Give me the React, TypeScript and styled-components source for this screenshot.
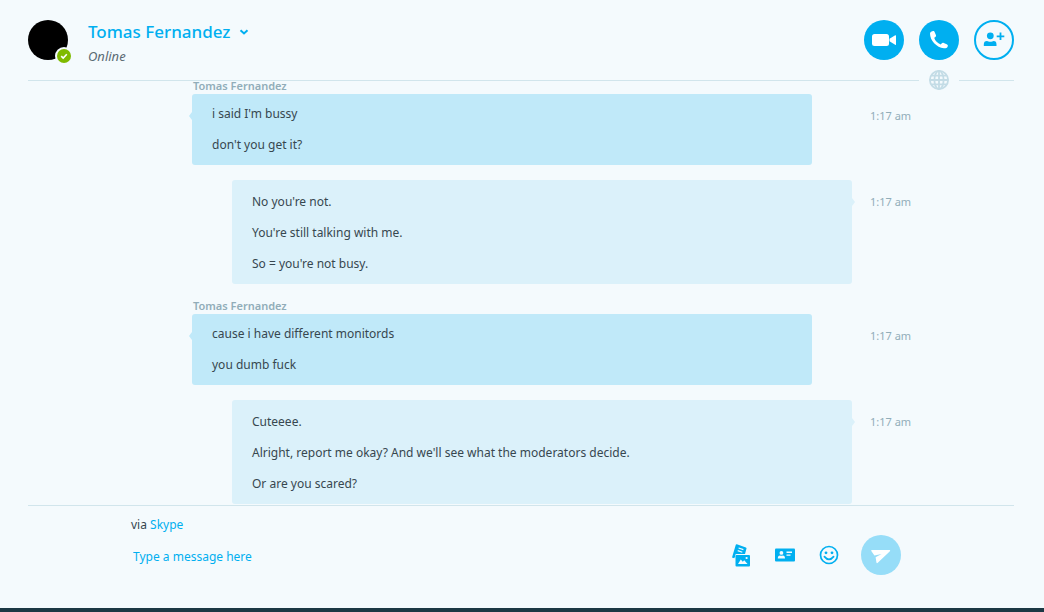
import React from "react";
import styled, { createGlobalStyle } from "styled-components";

const color = {
  page: "#f4fafd",
  blue: "#00aff0",
  sendIdle: "#96ddf8",
  incoming: "#c0e9f9",
  outgoing: "#dbf1fa",
  rule: "#d1e5ec",
  muted: "#91adb9",
  globe: "#c3dce6",
  text: "#37474f",
  online: "#7fba00",
};

const GlobalStyle = createGlobalStyle`
  *, *::before, *::after { box-sizing: border-box; }
  body {
    margin: 0;
    background: ${color.page};
    color: ${color.text};
    font-family: "Noto Sans", "Open Sans", sans-serif;
    font-size: 12px;
  }
  button { font: inherit; cursor: pointer; }
`;

const Page = styled.div`
  display: flex;
  flex-direction: column;
  height: 100vh;
  padding: 0 30px 0 28px;
  border-bottom: 4px solid #1b3844;
`;

const Header = styled.header`
  position: relative;
  display: flex;
  align-items: flex-start;
  flex: none;
  height: 81px;
  padding-top: 20px;
  border-bottom: 1px solid ${color.rule};
`;

const Avatar = styled.div`
  position: relative;
  width: 40px;
  height: 40px;
  border-radius: 50%;
  background: #000;
`;

const StatusBadge = styled.svg`
  position: absolute;
  right: -5px;
  bottom: -5px;
`;

const Contact = styled.div`
  flex: 1;
  margin-left: 20px;
`;

const ContactName = styled.h1`
  margin: 0;
  font-size: 17px;
  font-weight: 500;
  line-height: 24px;
`;

const NameButton = styled.button`
  display: flex;
  align-items: center;
  gap: 9px;
  padding: 0;
  border: 0;
  background: none;
  color: ${color.blue};
`;

const Presence = styled.p`
  margin: 2px 0 0;
  font-size: 13px;
  font-style: italic;
  line-height: 20px;
  color: #5b6b74;
`;

const Actions = styled.div`
  display: flex;
  gap: 15px;
`;

const RoundButton = styled.button<{ $fill?: string }>`
  display: grid;
  flex: none;
  place-items: center;
  width: 40px;
  height: 40px;
  padding: 0;
  border: 0;
  border-radius: 50%;
  background: ${(p) => p.$fill ?? "transparent"};
  color: ${(p) => (p.$fill ? "#fff" : color.blue)};
`;

const GlobeButton = styled.button`
  position: absolute;
  right: 55px;
  bottom: -10px;
  display: flex;
  padding: 0 10px;
  border: 0;
  background: ${color.page};
  color: ${color.globe};
`;

const Thread = styled.main`
  display: flex;
  flex: 1;
  flex-direction: column;
  justify-content: flex-end;
  gap: 15px;
  min-height: 0;
  margin-top: -4px;
  padding-bottom: 1px;
  overflow: hidden;
`;

const Message = styled.article`
  flex: none;
  width: 100%;
  max-width: 780px;
  margin: 0 auto;
  padding-left: 61px;
`;

const Sender = styled.h2`
  margin: 0;
  padding: 0 0 2px 1px;
  font-size: 11px;
  font-weight: 600;
  line-height: 13px;
  color: ${color.muted};
`;

const MessageRow = styled.div`
  display: grid;
  grid-template-columns: 1fr 59px;
`;

const Bubble = styled.div<{ $own?: boolean }>`
  position: relative;
  margin: ${(p) => (p.$own ? "0 0 0 40px" : "0 40px 0 0")};
  padding: ${(p) => (p.$own ? "6px 20px 5px" : "4px 20px 5px")};
  border-radius: 3px;
  background: ${(p) => (p.$own ? color.outgoing : color.incoming)};

  &::before {
    content: "";
    position: absolute;
    top: 18px;
    ${(p) => (p.$own ? "left: 100%" : "right: 100%")};
    border: solid transparent;
    border-width: 4px 0;
    ${(p) =>
      p.$own
        ? `border-left: 3px solid ${color.outgoing}`
        : `border-right: 3px solid ${color.incoming}`};
  }
`;

const Line = styled.p`
  margin: 0;
  line-height: 31px;
`;

const Time = styled.time`
  padding: 14px 0 0 18px;
  font-size: 11px;
  line-height: 16px;
  white-space: nowrap;
  color: ${color.muted};
`;

const Footer = styled.footer`
  flex: none;
  padding: 8px 0 33px;
  border-top: 1px solid ${color.rule};
`;

const FooterColumn = styled.div`
  width: 100%;
  max-width: 780px;
  margin: 0 auto;
  padding-right: 10px;
`;

const Via = styled.div`
  line-height: 21px;
`;

const ViaLink = styled.a`
  color: ${color.blue};
  text-decoration: none;
`;

const Composer = styled.form`
  display: flex;
  align-items: center;
`;

const MessageInput = styled.input`
  flex: 1;
  min-width: 0;
  padding: 4px 2px 0;
  border: 0;
  outline: 0;
  background: none;
  color: ${color.text};
  font: inherit;
  line-height: 20px;

  &::placeholder {
    color: ${color.blue};
    opacity: 1;
  }
`;

const Tools = styled.div`
  display: flex;
  margin-right: 10px;
`;

const ToolButton = styled.button`
  display: grid;
  place-items: center;
  width: 44px;
  height: 40px;
  padding: 0;
  border: 0;
  background: none;
  color: ${color.blue};
`;

type MessageData = { own?: boolean; lines: string[] };

const contact = "Tomas Fernandez";

const messages: MessageData[] = [
  { lines: ["i said I'm bussy", "don't you get it?"] },
  {
    own: true,
    lines: ["No you're not.", "You're still talking with me.", "So = you're not busy."],
  },
  { lines: ["cause i have different monitords", "you dumb fuck"] },
  {
    own: true,
    lines: [
      "Cuteeee.",
      "Alright, report me okay? And we'll see what the moderators decide.",
      "Or are you scared?",
    ],
  },
];

const ChevronIcon = () => (
  <svg width="10" height="8" viewBox="0 0 10 8" fill="none" stroke="currentColor" strokeWidth="2">
    <path d="M1.5 2.2 5 5.5 8.5 2.2" />
  </svg>
);

const VideoIcon = () => (
  <svg width="40" height="40" fill="currentColor">
    <rect x="8" y="14" width="17" height="12" rx="2.5" />
    <path d="M25.5 18.8 31.2 15.2Q32 14.9 32 15.8V24.4Q32 25.2 31.2 24.8L25.5 21.2Z" />
  </svg>
);

const PhoneIcon = () => (
  <svg width="40" height="40" fill="currentColor">
    <path d="M11 13.5C11 12 13 11 14.2 11c.8 0 1.2.5 1.5 1.2l1.2 2.8c.4 1 0 1.7-.8 2.2l-.9.6c.8 3 3.5 5.6 6.5 6.7l.9-1.1c.6-.8 1.4-.9 2.2-.5l2.9 1.4c1 .5 1.4 1.1 1 2.1C28 28 26.5 28.5 25 28.3 17.5 27.5 11 20.5 11 13.5z" />
  </svg>
);

const AddPersonIcon = () => (
  <svg width="40" height="40" fill="none" stroke="currentColor">
    <circle cx="20" cy="20" r="19" strokeWidth="2" />
    <path d="M26.5 12.5v7.6M22.7 16.3h7.6" strokeWidth="1.8" />
    <g fill="currentColor" stroke="none">
      <circle cx="16.3" cy="15.8" r="3.4" />
      <path d="M9.8 26v-1.6q0-3.4 3.2-3.4.8 0 1.4.4 1.9.9 3.8 0 .6-.4 1.4-.4 2.9 0 2.9 3.4V26z" />
    </g>
  </svg>
);

const GlobeIcon = () => (
  <svg width="20" height="20" fill="none" stroke="currentColor" strokeWidth="1.8">
    <circle cx="10" cy="10" r="9.1" />
    <ellipse cx="10" cy="10" rx="4.6" ry="9.1" />
    <path d="M10 1v18M1 10h18M2.6 5.6h14.8M2.6 14.4h14.8" />
  </svg>
);

const MediaIcon = () => (
  <svg width="24" height="24" fill="currentColor">
    <path d="M6.8 1.8q.3-.8 1.1-.5l9 3.1q.9.3.6 1.2L16 11H7.6q-1.4 0-1.4 1.4v1.2L5.2 15.2 3 14.4z" />
    <path d="m9.6 5 4.8 1.6M8.7 7.6l4.6 1.6" stroke={color.page} strokeWidth="1.2" />
    <rect x="6.5" y="12" width="14.5" height="11.5" rx="1" />
    <path d="m9 21 2.8-4.6 2 2.4 1.4-1.5L18.6 21z" fill={color.page} />
    <circle cx="17.6" cy="15" r="1.1" fill={color.page} />
  </svg>
);

const ContactCardIcon = () => (
  <svg width="20" height="14" fill="currentColor">
    <rect y=".5" width="20" height="13" rx="1" />
    <g fill={color.page}>
      <circle cx="6.4" cy="4.9" r="1.9" />
      <path d="M2.8 10.4q0-3 2.2-3 1.4.7 2.8 0 2.2 0 2.2 3z" />
      <path d="M11.5 3.6h5.5v1.3h-5.5zM11.5 6.4h4v1.3h-4z" />
    </g>
  </svg>
);

const SmileyIcon = () => (
  <svg width="20" height="20" fill="none" stroke="currentColor" strokeWidth="1.7">
    <circle cx="10" cy="10" r="8.5" />
    <path d="M5.4 11.6q4.6 5.6 9.2 0" strokeLinecap="round" />
    <circle cx="7" cy="7.8" r="1.4" fill="currentColor" stroke="none" />
    <circle cx="13" cy="7.8" r="1.4" fill="currentColor" stroke="none" />
  </svg>
);

const SendIcon = () => (
  <svg width="40" height="40" fill="currentColor">
    <path d="M10.8 15.1h17.6q1.4 0 .5 1.1L16.8 27.8q-1.1.9-1.4-.5l-.8-5.1 6-3.2-7.2 1.6-3.1-4.5q-.4-.8.5-1z" />
  </svg>
);

export default function App() {
  return (
    <>
      <GlobalStyle />
      <Page>
        <Header>
          <Avatar>
            <StatusBadge width="18" height="18">
              <circle cx="9" cy="9" r="9" fill={color.page} />
              <circle cx="9" cy="9" r="7" fill={color.online} />
              <path d="m6.2 9.2 2 1.9 3.6-3.8" fill="none" stroke="#fff" strokeWidth="1.6" />
            </StatusBadge>
          </Avatar>
          <Contact>
            <ContactName>
              <NameButton type="button">
                {contact}
                <ChevronIcon />
              </NameButton>
            </ContactName>
            <Presence>Online</Presence>
          </Contact>
          <Actions>
            <RoundButton type="button" aria-label="Video call" $fill={color.blue}>
              <VideoIcon />
            </RoundButton>
            <RoundButton type="button" aria-label="Call" $fill={color.blue}>
              <PhoneIcon />
            </RoundButton>
            <RoundButton type="button" aria-label="Add people">
              <AddPersonIcon />
            </RoundButton>
          </Actions>
          <GlobeButton type="button" aria-label="Translate">
            <GlobeIcon />
          </GlobeButton>
        </Header>

        <Thread>
          {messages.map((message) => (
            <Message key={message.lines[0]}>
              {!message.own && <Sender>{contact}</Sender>}
              <MessageRow>
                <Bubble $own={message.own}>
                  {message.lines.map((line) => (
                    <Line key={line}>{line}</Line>
                  ))}
                </Bubble>
                <Time dateTime="01:17">1:17 am</Time>
              </MessageRow>
            </Message>
          ))}
        </Thread>

        <Footer>
          <FooterColumn>
            <Via>
              via <ViaLink href="#skype">Skype</ViaLink>
            </Via>
            <Composer onSubmit={(event) => event.preventDefault()}>
              <MessageInput aria-label="Message" placeholder="Type a message here" />
              <Tools>
                <ToolButton type="button" aria-label="Send media">
                  <MediaIcon />
                </ToolButton>
                <ToolButton type="button" aria-label="Send contact">
                  <ContactCardIcon />
                </ToolButton>
                <ToolButton type="button" aria-label="Emoticons">
                  <SmileyIcon />
                </ToolButton>
              </Tools>
              <RoundButton type="submit" aria-label="Send" $fill={color.sendIdle}>
                <SendIcon />
              </RoundButton>
            </Composer>
          </FooterColumn>
        </Footer>
      </Page>
    </>
  );
}
